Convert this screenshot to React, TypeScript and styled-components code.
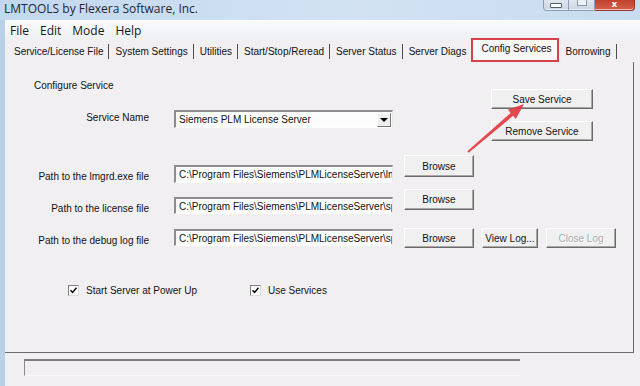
import React from 'react';
import styled, { createGlobalStyle } from 'styled-components';

const GlobalStyle = createGlobalStyle`
  html, body {
    margin: 0;
    padding: 0;
    background: #f1eff1;
  }
  body {
    font-family: "Liberation Sans", Arial, sans-serif;
  }
`;

const Window = styled.div`
  position: relative;
  width: 640px;
  height: 386px;
  overflow: hidden;
  display: flex;
  flex-direction: column;
  background: #b9d0e9;
`;

const TitleBar = styled.div`
  height: 20px;
  display: flex;
  align-items: flex-start;
  background: linear-gradient(to right, #c2d8ef, #d2e2f3 55%, #c8dbf0);
`;

const TitleText = styled.div`
  flex: 1;
  padding-left: 4px;
  font-family: "Open Sans", "Noto Sans", sans-serif;
  font-size: 12px;
  line-height: 18px;
  color: #1c2733;
`;

const Controls = styled.div`
  display: flex;
  margin-right: 5px;
`;

const CtrlButton = styled.div<{ $kind: 'min' | 'max' | 'close' }>`
  width: ${p => (p.$kind === 'close' ? 40 : 26)}px;
  height: 11px;
  display: flex;
  align-items: flex-start;
  justify-content: center;
  box-sizing: border-box;
  border: 1px solid ${p => (p.$kind === 'close' ? '#9b3526' : '#8c9cb1')};
  border-top: none;
  border-left: ${p => (p.$kind === 'min' ? '1px solid #8c9cb1' : 'none')};
  border-radius: ${p =>
    p.$kind === 'min' ? '0 0 0 4px' : p.$kind === 'close' ? '0 0 4px 0' : '0'};
  background: ${p =>
    p.$kind === 'close'
      ? 'linear-gradient(#c1412c, #d4604a)'
      : 'linear-gradient(#dfe6ef, #cad5e2)'};
  box-shadow: inset 0 -1px 0 rgba(255, 255, 255, 0.6);
`;

const MinGlyph = styled.div`
  width: 10px;
  height: 3px;
  margin-top: 3px;
  background: #fff;
  border: 1px solid #55606e;
  border-radius: 1px;
`;

const MaxGlyph = styled.div`
  width: 8px;
  height: 5px;
  border: 1px solid #8a96a6;
  border-top: none;
  background: #eef2f7;
`;

const CloseGlyph = styled.div`
  color: #fff;
  font-family: "DejaVu Sans", sans-serif;
  font-size: 9px;
  font-weight: bold;
  line-height: 9px;
`;

const Client = styled.div`
  flex: 1;
  margin-left: 5px;
  display: flex;
  flex-direction: column;
  background: #f1eff1;
`;

const MenuBar = styled.div`
  height: 20px;
  box-sizing: border-box;
  display: flex;
  align-items: center;
  gap: 11px;
  padding-left: 5px;
  border-top: 1px solid #fdfdfe;
  background: linear-gradient(#f8f9fb, #eff0f4);
  font-family: "Open Sans", "Noto Sans", sans-serif;
  font-size: 12px;
  color: #161616;
`;

const MenuItem = styled.span``;

const TabStrip = styled.div`
  height: 22px;
  display: flex;
  align-items: center;
  padding-left: 3px;
  font-size: 10px;
  color: #111;
`;

const Tab = styled.div<{ $sep?: boolean; $active?: boolean }>`
  height: ${p => (p.$active ? '24px' : '15px')};
  margin-top: ${p => (p.$active ? '-2px' : '0')};
  box-sizing: border-box;
  display: flex;
  align-items: center;
  padding: ${p => (p.$active ? '0 6px 3px 8px' : '0 5px 0 6px')};
  border-right: ${p => (p.$sep ? '1px solid #4d4d4d' : 'none')};
  border: ${p => (p.$active ? '2px solid #d7424a' : undefined)};
  background: ${p => (p.$active ? '#f9f8f9' : 'transparent')};
  white-space: nowrap;
`;

const Panel = styled.div`
  flex: 1;
  margin-right: 6px;
  border-right: 1px solid #6c6c6c;
  border-bottom: 1px solid #6c6c6c;
  font-size: 10px;
  color: #111;
`;

const TopSection = styled.div`
  display: grid;
  grid-template-columns: 486px 102px;
`;

const Heading = styled.div`
  margin: 17px 0 0 29px;
  line-height: 13px;
`;

const FieldGroup = styled.div<{ $top: number }>`
  display: flex;
  align-items: flex-start;
  gap: 25px;
  margin-top: ${p => p.$top}px;
`;

const Label = styled.div<{ $pad: number }>`
  width: 144px;
  padding-top: ${p => p.$pad}px;
  line-height: 13px;
  text-align: right;
  white-space: nowrap;
`;

const Sunken = styled.div<{ $h: number }>`
  width: 219px;
  height: ${p => p.$h}px;
  box-sizing: border-box;
  display: flex;
  align-items: center;
  padding-left: 3px;
  background: #fdfdfd;
  border-top: 2px solid #8d8d8d;
  border-left: 2px solid #8d8d8d;
  border-right: 1px solid #e6e6e6;
  border-bottom: 1px solid #ffffff;
  overflow: hidden;
  white-space: nowrap;
`;

const SelectText = styled.div`
  flex: 1;
`;

const DropButton = styled.div`
  width: 14px;
  height: 14px;
  margin-right: 1px;
  box-sizing: border-box;
  display: flex;
  align-items: center;
  justify-content: center;
  background: #f0eff0;
  border-top: 1px solid #fff;
  border-left: 1px solid #fff;
  border-right: 1px solid #777;
  border-bottom: 1px solid #777;
`;

const Triangle = styled.div`
  width: 0;
  height: 0;
  border-left: 4px solid transparent;
  border-right: 4px solid transparent;
  border-top: 4px solid #000;
`;

const ButtonStack = styled.div`
  display: flex;
  flex-direction: column;
  gap: 12px;
  margin-top: 27px;
`;

const Button = styled.div<{ $w: number; $h: number; $disabled?: boolean }>`
  width: ${p => p.$w}px;
  height: ${p => p.$h}px;
  box-sizing: border-box;
  display: flex;
  align-items: center;
  justify-content: center;
  background: #f1f0f1;
  border-top: 1px solid #ffffff;
  border-left: 1px solid #ffffff;
  border-right: 1px solid #6a6a6a;
  border-bottom: 1px solid #6a6a6a;
  box-shadow: inset -1px -1px 0 #a8a8a8;
  color: ${p => (p.$disabled ? '#a9a9a9' : '#111')};
  text-shadow: ${p => (p.$disabled ? '1px 1px 0 #ffffff' : 'none')};
  white-space: nowrap;
`;

const PathRow = styled.div<{ $top: number }>`
  display: flex;
  align-items: flex-start;
  gap: 8px;
  margin-top: ${p => p.$top}px;
`;

const PathField = styled(FieldGroup)`
  margin-right: 3px;
`;

const CheckRow = styled.div`
  display: grid;
  grid-template-columns: 182px auto;
  margin: 36px 0 0 63px;
`;

const CheckItem = styled.label`
  display: flex;
  align-items: center;
  gap: 7px;
  line-height: 13px;
`;

const CheckBox = styled.span`
  width: 11px;
  height: 11px;
  box-sizing: border-box;
  display: flex;
  align-items: center;
  justify-content: center;
  background: #fff;
  border-top: 1px solid #808080;
  border-left: 1px solid #808080;
  border-right: 1px solid #dcdcdc;
  border-bottom: 1px solid #dcdcdc;
`;

const StatusArea = styled.div`
  height: 33px;
  box-sizing: border-box;
  padding: 6px 0 0 19px;
`;

const StatusBox = styled.div`
  width: 496px;
  height: 17px;
  box-sizing: border-box;
  border-top: 2px solid #7d7d7d;
  border-left: 1px solid #8a8a8a;
  border-bottom: 1px solid #fbfbfb;
`;

const Arrow = styled.svg`
  position: absolute;
  left: 460px;
  top: 95px;
  width: 75px;
  height: 65px;
`;

const Check = () => (
  <CheckBox>
    <svg width="7" height="7" viewBox="0 0 7 7">
      <path d="M0.5 3.2 L2.6 5.4 L6.5 0.8" fill="none" stroke="#000" strokeWidth="1.5" />
    </svg>
  </CheckBox>
);

const tabs = [
  'Service/License File',
  'System Settings',
  'Utilities',
  'Start/Stop/Reread',
  'Server Status',
  'Server Diags',
  'Config Services',
  'Borrowing',
];

const paths = [
  { label: 'Path to the lmgrd.exe file', value: 'C:\\Program Files\\Siemens\\PLMLicenseServer\\lmgrd.exe', top: 14, offset: 10, h: 18, bh: 22 },
  { label: 'Path to the license file', value: 'C:\\Program Files\\Siemens\\PLMLicenseServer\\splm.lic', top: 6, offset: 8, h: 17, bh: 21 },
  { label: 'Path to the debug log file', value: 'C:\\Program Files\\Siemens\\PLMLicenseServer\\splm.log', top: 13, offset: 1, h: 17, bh: 20 },
];

const App: React.FC = () => {
  return (
    <Window>
      <GlobalStyle />
      <TitleBar>
        <TitleText>LMTOOLS by Flexera Software, Inc.</TitleText>
        <Controls>
          <CtrlButton $kind="min"><MinGlyph /></CtrlButton>
          <CtrlButton $kind="max"><MaxGlyph /></CtrlButton>
          <CtrlButton $kind="close"><CloseGlyph>x</CloseGlyph></CtrlButton>
        </Controls>
      </TitleBar>

      <Client>
        <MenuBar>
          <MenuItem>File</MenuItem>
          <MenuItem>Edit</MenuItem>
          <MenuItem>Mode</MenuItem>
          <MenuItem>Help</MenuItem>
        </MenuBar>

        <TabStrip>
          {tabs.map((t, i) => (
            <Tab
              key={t}
              $active={t === 'Config Services'}
              $sep={t !== 'Config Services' && tabs[i + 1] !== 'Config Services'}
            >
              {t}
            </Tab>
          ))}
        </TabStrip>

        <Panel>
          <TopSection>
            <div>
              <Heading>Configure Service</Heading>
              <FieldGroup $top={18}>
                <Label $pad={1}>Service Name</Label>
                <Sunken $h={18}>
                  <SelectText>Siemens PLM License Server</SelectText>
                  <DropButton><Triangle /></DropButton>
                </Sunken>
              </FieldGroup>
            </div>
            <ButtonStack>
              <Button $w={102} $h={20}>Save Service</Button>
              <Button $w={102} $h={20}>Remove Service</Button>
            </ButtonStack>
          </TopSection>

          {paths.map((p, i) => (
            <PathRow key={p.label} $top={p.top}>
              <PathField $top={p.offset}>
                <Label $pad={5}>{p.label}</Label>
                <Sunken $h={p.h}>{p.value}</Sunken>
              </PathField>
              <Button $w={70} $h={p.bh}>Browse</Button>
              {i === 2 && (
                <>
                  <Button $w={56} $h={p.bh}>View Log...</Button>
                  <Button $w={70} $h={p.bh} $disabled>Close Log</Button>
                </>
              )}
            </PathRow>
          ))}

          <CheckRow>
            <CheckItem><Check />Start Server at Power Up</CheckItem>
            <CheckItem><Check />Use Services</CheckItem>
          </CheckRow>
        </Panel>

        <StatusArea>
          <StatusBox />
        </StatusArea>
      </Client>

      <Arrow viewBox="0 0 75 65">
        <polygon
          points="7.35,56.24 50.7,18 48,14.8 64,9 55.8,24 53.1,20.8 8.65,57.76"
          fill="#e23a40"
          fillOpacity="0.92"
        />
      </Arrow>
    </Window>
  );
};

export default App;
